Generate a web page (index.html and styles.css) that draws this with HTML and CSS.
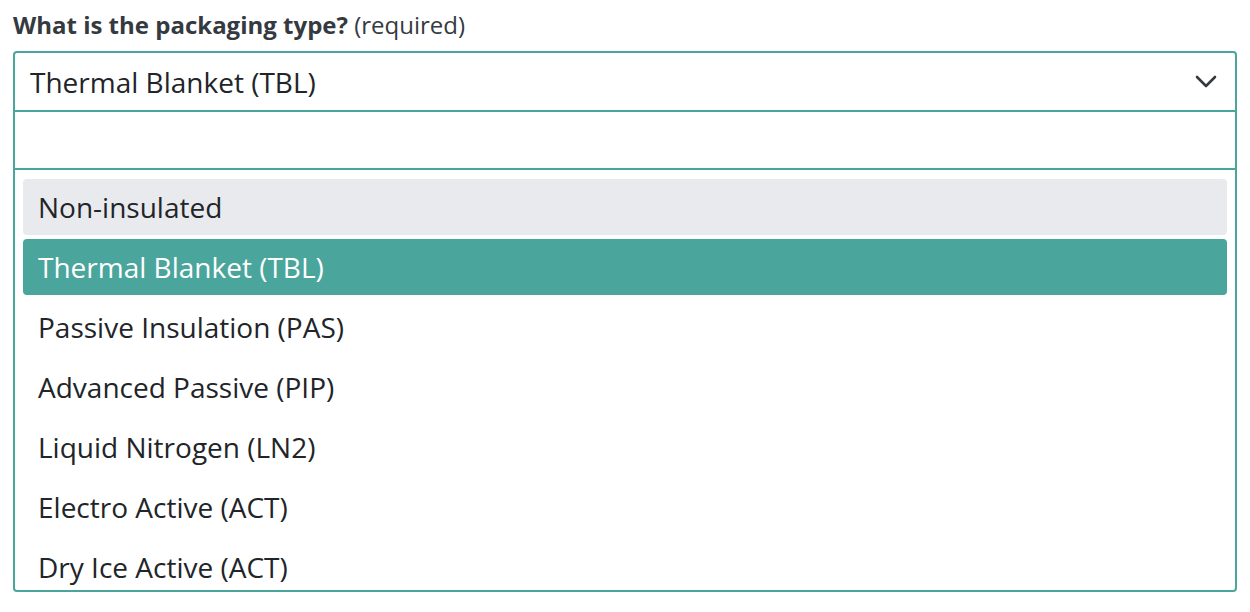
FILE: index.html
```html
<!DOCTYPE html>
<html lang="en">
<head>
    <meta charset="UTF-8">
    <meta name="viewport" content="width=device-width, initial-scale=1.0">
    <title>Packaging type</title>
    <link rel="stylesheet" href="styles.css">
</head>
<body>
    <div class="field">
        <label class="field-label" for="packaging"><b>What is the packaging type?</b> (required)</label>
        <div class="picker">
            <div class="picker-value" id="packaging">
                <span>Thermal Blanket (TBL)</span>
                <svg class="chevron" width="22" height="14" viewBox="0 0 22 14">
                    <path d="M2 2 L11 11 L20 2" fill="none" stroke="#343a40" stroke-width="2.6" stroke-linecap="round" stroke-linejoin="round"/>
                </svg>
            </div>
            <input class="picker-search" type="text">
            <ul class="picker-list">
                <li class="option hover">Non-insulated</li>
                <li class="option selected">Thermal Blanket (TBL)</li>
                <li class="option">Passive Insulation (PAS)</li>
                <li class="option">Advanced Passive (PIP)</li>
                <li class="option">Liquid Nitrogen (LN2)</li>
                <li class="option">Electro Active (ACT)</li>
                <li class="option">Dry Ice Active (ACT)</li>
            </ul>
        </div>
    </div>
</body>
</html>
```

FILE: styles.css
```css
body {
    margin: 0;
    background-color: #fff;
    font-family: "Open Sans", Arial, sans-serif;
    color: #212529;
}
.field {
    padding: 10px 13px 0 13px;
}
.field-label {
    display: block;
    font-size: 24px;
    line-height: 30px;
    color: #343a40;
    margin-bottom: 11px;
}
.field-label b {
    font-weight: 700;
}
.picker {
    border: 2px solid #4aa59c;
    border-radius: 4px;
    overflow: hidden;
}
.picker-value {
    display: flex;
    justify-content: space-between;
    align-items: center;
    height: 57px;
    padding: 0 18px 0 15px;
    font-size: 28px;
    border-bottom: 2px solid #4aa59c;
}
.chevron {
    display: block;
}
.picker-search {
    display: block;
    width: 100%;
    height: 58px;
    border: none;
    border-bottom: 2px solid #4aa59c;
    margin: 0;
    padding: 0 15px;
    box-sizing: border-box;
    font-family: inherit;
    font-size: 28px;
    outline: none;
}
.picker-list {
    list-style: none;
    margin: 0;
    padding: 9px 8px 0 8px;
    height: 420px;
    overflow: hidden;
    box-sizing: border-box;
}
.option {
    height: 56px;
    line-height: 56px;
    padding: 0 15px;
    margin-bottom: 4px;
    border-radius: 4px;
    font-size: 28px;
    white-space: nowrap;
}
.option.hover {
    background-color: #e9eaee;
}
.option.selected {
    background-color: #4aa59c;
    color: #fff;
}
```
